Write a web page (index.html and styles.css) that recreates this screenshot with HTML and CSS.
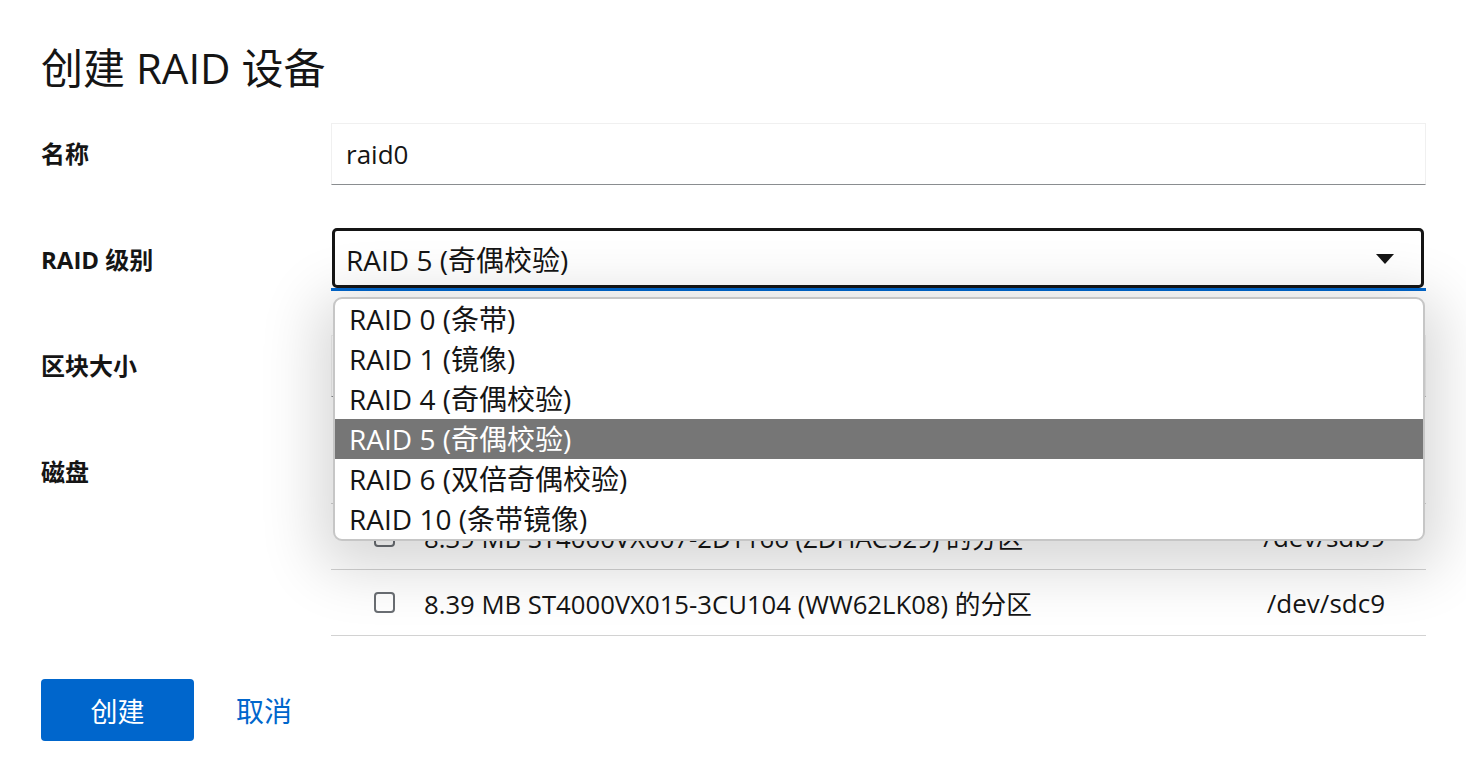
FILE: index.html
```html
<!DOCTYPE html>
<html lang="zh-CN">
<head>
<meta charset="utf-8">
<title>创建 RAID 设备</title>
<link rel="stylesheet" href="styles.css">
</head>
<body>
<div class="dialog">
  <h1 class="title">创建 RAID 设备</h1>
  <div class="form">
    <div class="row row-name">
      <div class="label">名称</div>
      <div class="control">
        <div class="text-input">raid0</div>
      </div>
    </div>
    <div class="row row-level">
      <div class="label">RAID 级别</div>
      <div class="control">
        <div class="select focused">
          <span class="select-value">RAID 5 (奇偶校验)</span>
          <svg class="caret" width="18" height="10" viewBox="0 0 18 10"><polygon points="0,0 18,0 9,10" fill="#151515"/></svg>
        </div>
        <ul class="menu">
          <li class="opt">RAID 0 (条带)</li>
          <li class="opt">RAID 1 (镜像)</li>
          <li class="opt">RAID 4 (奇偶校验)</li>
          <li class="opt selected">RAID 5 (奇偶校验)</li>
          <li class="opt">RAID 6 (双倍奇偶校验)</li>
          <li class="opt">RAID 10 (条带镜像)</li>
        </ul>
      </div>
    </div>
    <div class="row row-chunk">
      <div class="label">区块大小</div>
      <div class="control">
        <div class="select plain">
          <span class="select-value">512 KiB</span>
        </div>
      </div>
    </div>
    <div class="row row-disks">
      <div class="label">磁盘</div>
      <div class="control">
        <div class="disk-table">
          <div class="disk-row">
            <span class="checkbox"></span>
            <span class="disk-name">8.39 MB ST4000VX007-2DT166 (ZDHAB9SK) 的分区</span>
            <span class="disk-path">/dev/sda9</span>
          </div>
          <div class="disk-row">
            <span class="checkbox"></span>
            <span class="disk-name">8.39 MB ST4000VX007-2DT166 (ZDHAC529) 的分区</span>
            <span class="disk-path">/dev/sdb9</span>
          </div>
          <div class="disk-row">
            <span class="checkbox"></span>
            <span class="disk-name">8.39 MB ST4000VX015-3CU104 (WW62LK08) 的分区</span>
            <span class="disk-path">/dev/sdc9</span>
          </div>
        </div>
      </div>
    </div>
  </div>
  <div class="actions">
    <button class="btn-primary">创建</button>
    <button class="btn-link">取消</button>
  </div>
</div>
</body>
</html>
```

FILE: styles.css
```css
* { box-sizing: border-box; }
html, body {
  margin: 0;
  padding: 0;
  background: #ffffff;
}
body {
  font-family: "Open Sans", "Noto Sans CJK SC", sans-serif;
  color: #151515;
  font-size: 26px;
  overflow: hidden;
}
.dialog {
  padding: 44px 40px 0 41px;
}
.title {
  margin: 0;
  font-size: 42px;
  font-weight: 400;
  line-height: 48px;
  color: #151515;
}
.form {
  margin-top: 31px;
  display: flex;
  flex-direction: column;
}
.row {
  display: grid;
  grid-template-columns: 290px 1fr;
  align-items: start;
}
.row-level { margin-top: 44px; }
.row-chunk { margin-top: 44px; }
.row-disks { margin-top: 44px; }
.label {
  font-weight: 700;
  font-size: 24px;
  line-height: 62px;
  height: 62px;
}
.control { position: relative; }
.text-input {
  height: 62px;
  line-height: 60px;
  padding: 0 14px;
  border: 1px solid #f0f0f0;
  border-bottom: 1px solid #8a8d90;
  font-size: 26px;
}
.select {
  height: 62px;
  display: flex;
  align-items: center;
  padding: 0 32px 0 15px;
  position: relative;
  font-size: 28px;
}
.select.focused {
  border-bottom: 3px solid #0066cc;
}
.select.focused::before {
  content: "";
  position: absolute;
  left: 1px;
  right: 2px;
  top: -1px;
  bottom: 0;
  border: 3px solid #151515;
  border-radius: 5px;
}
.select.plain {
  border: 1px solid #f0f0f0;
  border-bottom: 1px solid #8a8d90;
  font-size: 26px;
}
.select-value { flex: 1; }
.caret { flex: none; }
.menu {
  position: absolute;
  left: 2px;
  right: 1px;
  top: 68px;
  margin: 0;
  padding: 0;
  list-style: none;
  background: #ffffff;
  border: 2px solid #c6c6c6;
  border-radius: 9px;
  box-shadow: 0 14px 60px 14px rgba(0, 0, 0, 0.16);
  overflow: hidden;
  z-index: 10;
}
.opt {
  height: 40px;
  line-height: 40px;
  padding-left: 14px;
  font-size: 28px;
  color: #151515;
}
.opt.selected {
  background: #767676;
  color: #ffffff;
}
.disk-table {
  margin-top: -3px;
}
.disk-row {
  height: 66px;
  display: flex;
  align-items: center;
  border-bottom: 1px solid #d2d2d2;
  padding: 0 41px 0 43px;
}
.checkbox {
  width: 21px;
  height: 21px;
  border: 2px solid #6a6e73;
  border-radius: 4px;
  flex: none;
  margin-right: 29px;
}
.disk-name { flex: 1; font-size: 25.7px; }
.disk-path { flex: none; }
.actions {
  margin-top: 43px;
  display: flex;
  align-items: center;
}
.btn-primary {
  width: 153px;
  height: 62px;
  background: #0066cc;
  color: #ffffff;
  border: none;
  border-radius: 4px;
  font-family: inherit;
  font-size: 27px;
  padding: 0;
}
.btn-link {
  margin-left: 42px;
  background: none;
  border: none;
  color: #0066cc;
  font-family: inherit;
  font-size: 28px;
  padding: 0;
}
```
